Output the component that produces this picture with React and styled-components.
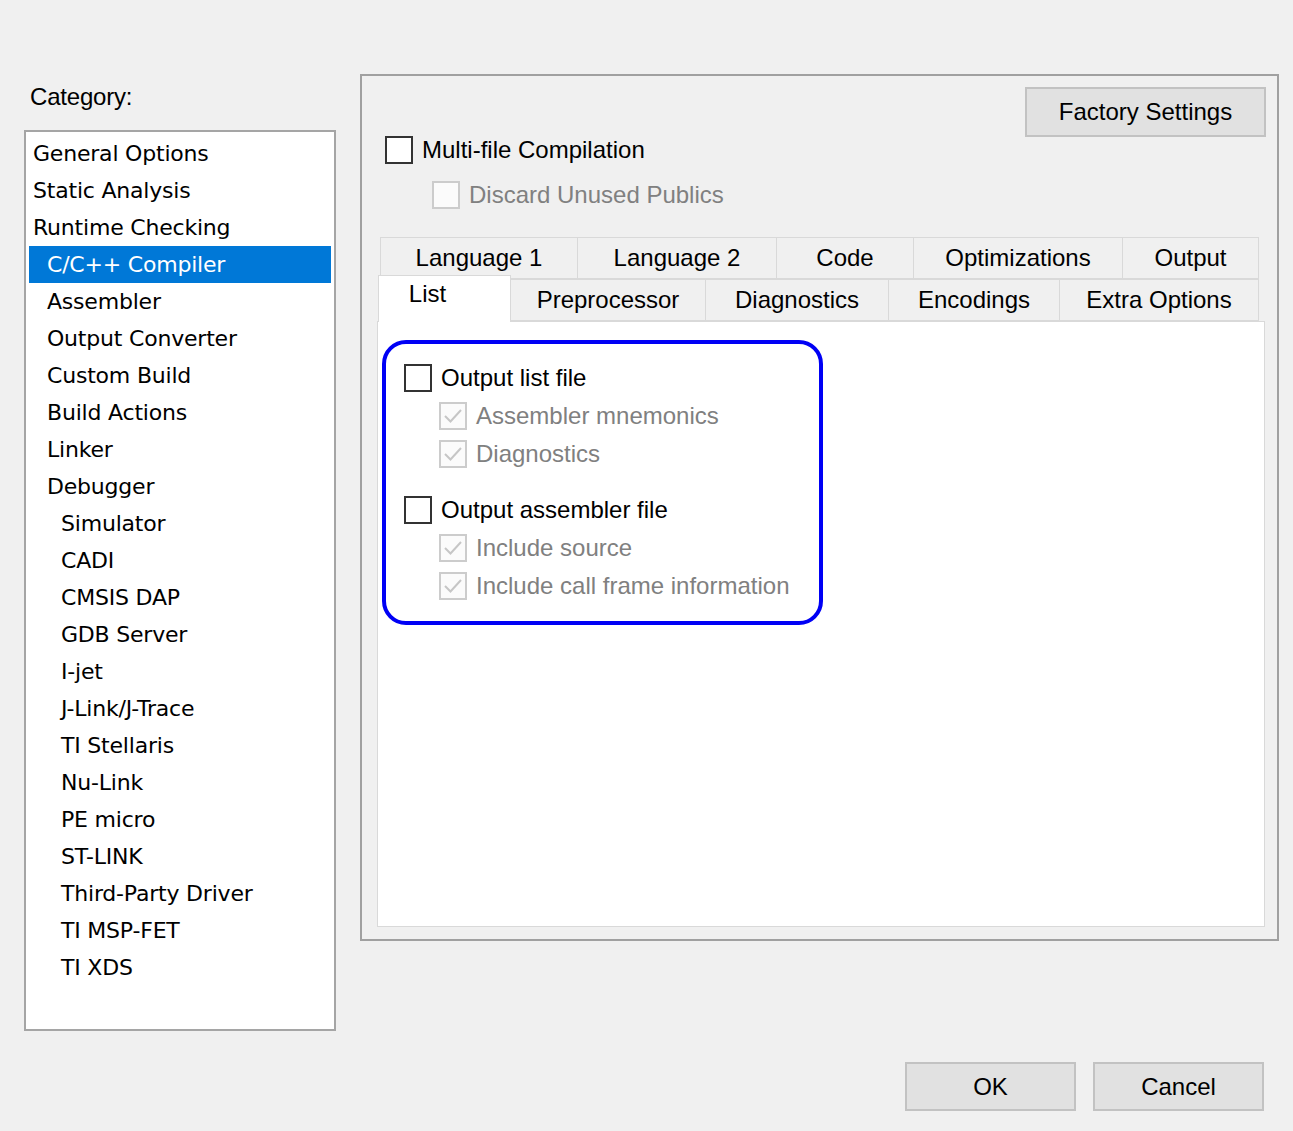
import React from "react";
import styled, { createGlobalStyle } from "styled-components";

const GlobalStyle = createGlobalStyle`
  html, body {
    margin: 0;
    padding: 0;
    background: #f0f0f0;
  }
  * {
    box-sizing: border-box;
  }
`;

const Page = styled.div`
  width: 1293px;
  height: 1131px;
  background: #f0f0f0;
  padding: 74px 0 0 24px;
  display: grid;
  grid-template-columns: 312px 919px;
  grid-template-rows: auto auto;
  column-gap: 24px;
  align-items: start;
  align-content: start;
  font-family: "Liberation Sans", Arial, sans-serif;
  color: #000;
`;

const LeftColumn = styled.div`
  display: flex;
  flex-direction: column;
`;

const CategoryLabel = styled.div`
  font-size: 24px;
  line-height: 26px;
  padding: 10px 0 0 6px;
  margin-bottom: 20px;
  letter-spacing: -0.2px;
`;

const CategoryList = styled.div`
  height: 901px;
  background: #fff;
  border: 2px solid #a5a5a5;
  padding: 3px;
  display: flex;
  flex-direction: column;
`;

const CategoryItem = styled.div`
  height: 37px;
  line-height: 38px;
  padding-left: ${(p) => 4 + p.level * 14}px;
  font-family: "DejaVu Sans", Verdana, sans-serif;
  font-size: 22px;
  letter-spacing: -0.2px;
  white-space: nowrap;
  background: ${(p) => (p.selected ? "#0078d7" : "transparent")};
  color: ${(p) => (p.selected ? "#fff" : "#000")};
`;

const OptionsPanel = styled.div`
  height: 867px;
  border: 2px solid #a0a0a0;
  padding: 0 12px 12px 15px;
  display: flex;
  flex-direction: column;
`;

const TopArea = styled.div`
  height: 161px;
  display: flex;
  justify-content: space-between;
  align-items: flex-start;
`;

const TopChecks = styled.div`
  padding: 60px 0 0 8px;
  display: flex;
  flex-direction: column;
  gap: 17px;
`;

const DialogButton = styled.button`
  width: ${(p) => p.w}px;
  height: ${(p) => p.h}px;
  background: #e1e1e1;
  border: 2px solid #c2c2c2;
  font-family: "Liberation Sans", Arial, sans-serif;
  font-size: 24px;
  color: #000;
  padding: 0;
`;

const FactoryButton = styled(DialogButton)`
  margin-top: 11px;
  margin-right: -1px;
`;

const CheckRow = styled.label`
  display: flex;
  align-items: center;
  gap: 9px;
  height: ${(p) => p.h || 28}px;
  margin-left: ${(p) => p.indent || 0}px;
  font-size: 24px;
  white-space: nowrap;
  color: ${(p) => (p.disabled ? "#808080" : "#000")};
`;

const Box = styled.span`
  width: 28px;
  height: 28px;
  flex: none;
  background: ${(p) => (p.disabled ? "#fbfbfb" : "#fff")};
  border: 2px solid ${(p) => (p.disabled ? "#cccccc" : "#333333")};
  display: flex;
  align-items: center;
  justify-content: center;
`;

const Tabs = styled.div`
  flex: 1;
  display: flex;
  flex-direction: column;
`;

const TabRow = styled.div`
  display: flex;
  margin: 0 6px 0 3px;
  height: 42px;
`;

const Tab = styled.div`
  width: ${(p) => p.w}px;
  height: ${(p) => (p.active ? 47 : 42)}px;
  margin-top: ${(p) => (p.active ? -4 : 0)}px;
  margin-left: ${(p) => (p.active ? -2 : 0)}px;
  padding-bottom: ${(p) => (p.active ? 10 : 0)}px;
  padding-right: ${(p) => (p.active ? 34 : 0)}px;
  position: relative;
  z-index: ${(p) => (p.active ? 2 : 1)};
  background: ${(p) => (p.active ? "#fff" : "#f0f0f0")};
  border: 1px solid #d9d9d9;
  border-bottom: ${(p) => (p.active ? "none" : "1px solid #d9d9d9")};
  border-left: ${(p) => (p.first ? "1px solid #d9d9d9" : "none")};
  display: flex;
  align-items: center;
  justify-content: center;
  font-size: 24px;
  white-space: nowrap;
`;

const TabContent = styled.div`
  flex: 1;
  background: #fff;
  border: 1px solid #d9d9d9;
  padding: 18px 0 0 4px;
`;

const Highlight = styled.div`
  width: 441px;
  border: 4px solid #0000f5;
  border-radius: 24px;
  padding: 15px 0 16px 18px;
  display: flex;
  flex-direction: column;
`;

const CheckGroup = styled.div`
  display: flex;
  flex-direction: column;
  & + & {
    margin-top: 18px;
  }
`;

const ButtonBar = styled.div`
  grid-column: 1 / span 2;
  display: flex;
  justify-content: flex-end;
  gap: 17px;
  margin-top: 31px;
  padding-right: 15px;
`;

const Tick = () => (
  <svg width="22" height="22" viewBox="0 0 22 22">
    <polyline points="3,11 8.5,16.5 19,5" fill="none" stroke="#c6c6c6" strokeWidth="2" />
  </svg>
);

const Check = ({ label, disabled, checked, indent, h }) => (
  <CheckRow disabled={disabled} indent={indent} h={h}>
    <Box disabled={disabled}>{checked && <Tick />}</Box>
    {label}
  </CheckRow>
);

const categories = [
  ["General Options", 0],
  ["Static Analysis", 0],
  ["Runtime Checking", 0],
  ["C/C++ Compiler", 1],
  ["Assembler", 1],
  ["Output Converter", 1],
  ["Custom Build", 1],
  ["Build Actions", 1],
  ["Linker", 1],
  ["Debugger", 1],
  ["Simulator", 2],
  ["CADI", 2],
  ["CMSIS DAP", 2],
  ["GDB Server", 2],
  ["I-jet", 2],
  ["J-Link/J-Trace", 2],
  ["TI Stellaris", 2],
  ["Nu-Link", 2],
  ["PE micro", 2],
  ["ST-LINK", 2],
  ["Third-Party Driver", 2],
  ["TI MSP-FET", 2],
  ["TI XDS", 2],
];

const tabRow1 = [
  ["Language 1", 198],
  ["Language 2", 199],
  ["Code", 137],
  ["Optimizations", 209],
  ["Output", 136],
];

const tabRow2 = [
  ["List", 133],
  ["Preprocessor", 195],
  ["Diagnostics", 183],
  ["Encodings", 171],
  ["Extra Options", 199],
];

const App = () => {
  return (
    <>
      <GlobalStyle />
      <Page>
        <LeftColumn>
          <CategoryLabel>Category:</CategoryLabel>
          <CategoryList>
            {categories.map(([name, level]) => (
              <CategoryItem key={name} level={level} selected={name === "C/C++ Compiler"}>
                {name}
              </CategoryItem>
            ))}
          </CategoryList>
        </LeftColumn>

        <OptionsPanel>
          <TopArea>
            <TopChecks>
              <Check label="Multi-file Compilation" />
              <Check label="Discard Unused Publics" disabled indent={47} />
            </TopChecks>
            <FactoryButton w={241} h={50}>
              Factory Settings
            </FactoryButton>
          </TopArea>

          <Tabs>
            <TabRow>
              {tabRow1.map(([name, w], i) => (
                <Tab key={name} w={w} first={i === 0}>
                  {name}
                </Tab>
              ))}
            </TabRow>
            <TabRow>
              {tabRow2.map(([name, w], i) => (
                <Tab key={name} w={w} first={i === 0} active={name === "List"}>
                  {name}
                </Tab>
              ))}
            </TabRow>
            <TabContent>
              <Highlight>
                <CheckGroup>
                  <Check label="Output list file" h={38} />
                  <Check label="Assembler mnemonics" disabled checked indent={35} h={38} />
                  <Check label="Diagnostics" disabled checked indent={35} h={38} />
                </CheckGroup>
                <CheckGroup>
                  <Check label="Output assembler file" h={38} />
                  <Check label="Include source" disabled checked indent={35} h={38} />
                  <Check label="Include call frame information" disabled checked indent={35} h={38} />
                </CheckGroup>
              </Highlight>
            </TabContent>
          </Tabs>
        </OptionsPanel>

        <ButtonBar>
          <DialogButton w={171} h={49}>OK</DialogButton>
          <DialogButton w={171} h={49}>Cancel</DialogButton>
        </ButtonBar>
      </Page>
    </>
  );
};

export default App;
